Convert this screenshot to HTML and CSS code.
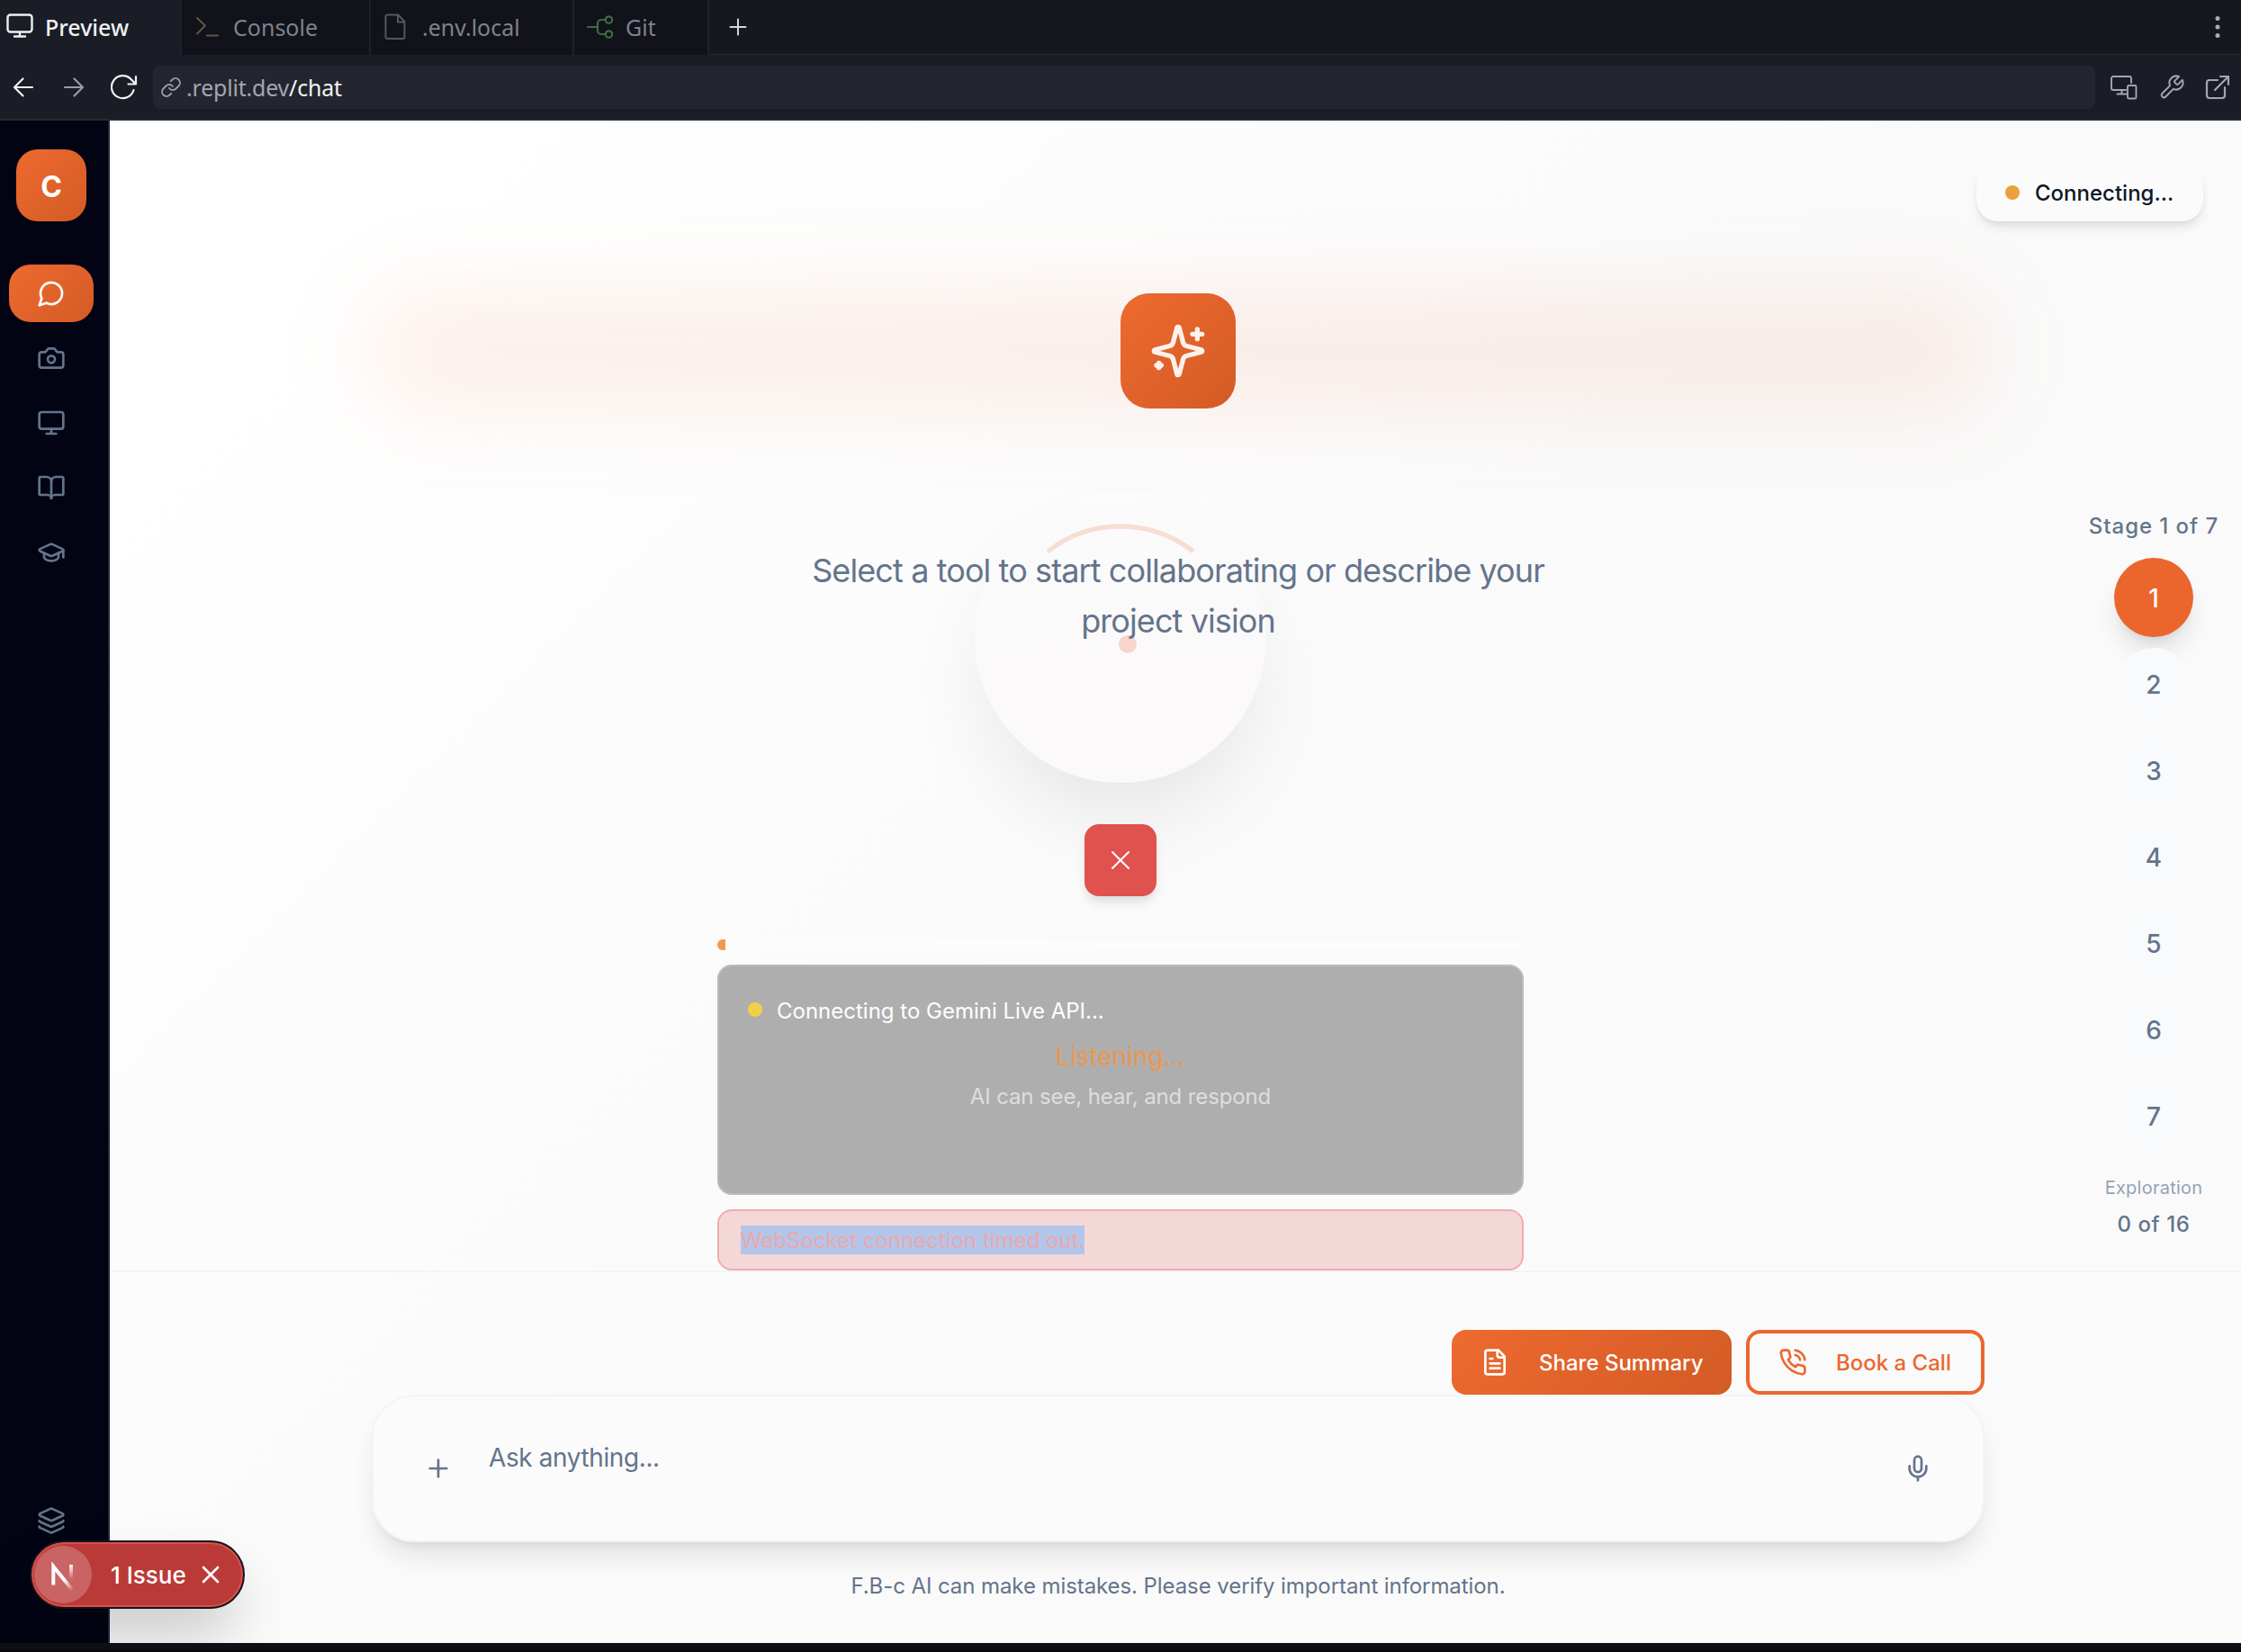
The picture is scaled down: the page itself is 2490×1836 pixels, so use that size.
FILE: index.html
```html
<!DOCTYPE html>
<html lang="en">
<head>
<meta charset="utf-8">
<title>Preview</title>
<link rel="stylesheet" href="styles.css">
</head>
<body>
<div class="window">
  <header class="tabs">
    <div class="tab tab-active">
      <svg class="ico" width="32" height="48" viewBox="0 0 32 48" stroke-width="2.4"><rect x="1.5" y="10.500" width="27" height="19" rx="3"/><path d="M15 30v4M9 34.500h12"/></svg>
      <span>Preview</span>
    </div>
    <div class="tab tab-console">
      <svg class="ico" width="28" height="32" viewBox="0 0 28 32" stroke="#5c5942" stroke-width="2"><path d="M3 6l9 8.500-9 9M14 25.500h12"/></svg>
      <span>Console</span>
    </div>
    <div class="tab tab-env">
      <svg class="ico" width="28" height="32" viewBox="0 0 28 32" stroke="#55575f" stroke-width="2"><path d="M4.500 2.500h12l7 7.500v17a2 2 0 0 1-2 2h-17a2 2 0 0 1-2-2v-22.500a2 2 0 0 1 2-2zM16 3v7.500h7.500"/></svg>
      <span>.env.local</span>
    </div>
    <div class="tab tab-git">
      <svg class="ico" width="32" height="32" viewBox="0 0 32 32" stroke="#3f6a45" stroke-width="2.200"><path d="M2 16h11M22 8h-5a4 4 0 0 0-4 4v8a4 4 0 0 0 4 4h5"/><circle cx="25.500" cy="8" r="3.700"/><circle cx="25.500" cy="24" r="3.700"/></svg>
      <span>Git</span>
    </div>
    <div class="tab-rest">
      <svg class="ico" width="20" height="20" viewBox="0 0 20 20" stroke="#d5d6da" stroke-width="2"><path d="M10 1.500v17M1.500 10h17"/></svg>
      <svg width="6" height="26" viewBox="0 0 6 26" fill="#a9acb6"><circle cx="3" cy="3.500" r="2.500"/><circle cx="3" cy="13" r="2.500"/><circle cx="3" cy="22.500" r="2.500"/></svg>
    </div>
  </header>
  <nav class="toolbar">
    <div class="nav-buttons">
      <svg class="ico" width="24" height="24" viewBox="0 0 24 24" stroke="#f2f2f4" stroke-width="2.200"><path d="M22 12H2M11.500 2.500L2 12l9.500 9.500"/></svg>
      <svg class="ico" width="24" height="24" viewBox="0 0 24 24" stroke="#9a9da6" stroke-width="2.200"><path d="M2 12H22M12.500 2.500L22 12l-9.500 9.500"/></svg>
      <svg class="ico" width="32" height="30" viewBox="0 0 32 30" stroke="#f2f2f4" stroke-width="2.200"><path d="M25.500 18A12.500 12.500 0 1 1 22.500 6l4.500 4.500M28 3v8.500h-8.500"/></svg>
    </div>
    <div class="url">
      <svg class="ico" width="24" height="24" viewBox="0 0 24 24" stroke="#9a9da6" stroke-width="1.900"><path d="M10 13a5 5 0 0 0 7.540.540l3-3a5 5 0 0 0-7.070-7.070l-1.720 1.710"/><path d="M14 11a5 5 0 0 0-7.540-.540l-3 3a5 5 0 0 0 7.070 7.070l1.710-1.710"/></svg>
      <span>.replit.dev<b>/chat</b></span>
    </div>
    <div class="tool-buttons">
      <svg class="ico" width="30" height="28" viewBox="0 0 30 28" stroke-width="1.900"><path d="M23 9V4a2 2 0 0 0-2-2H3a2 2 0 0 0-2 2v11a2 2 0 0 0 2 2h14M12.500 17v4M7.500 21.500h10"/><rect x="19" y="12" width="9.500" height="14.500" rx="1.500"/></svg>
      <svg class="ico" width="30" height="30" viewBox="0 0 24 24" stroke-width="1.600"><path d="M14.700 6.300a1 1 0 0 0 0 1.400l1.600 1.600a1 1 0 0 0 1.400 0l3.770-3.770a6 6 0 0 1-7.940 7.940l-6.910 6.910a2.120 2.120 0 0 1-3-3l6.910-6.910a6 6 0 0 1 7.940-7.940l-3.760 3.760z"/></svg>
      <svg class="ico" width="28" height="28" viewBox="0 0 28 28" stroke-width="2.200"><path d="M14 6H5a3 3 0 0 0-3 3v14a3 3 0 0 0 3 3h14a3 3 0 0 0 3-3v-9M11 17L26 2M17 2h9v9"/></svg>
    </div>
  </nav>

  <div class="app">
    <aside class="sidebar">
      <div class="logo">C</div>
      <div class="menu">
        <div class="item item-active"><svg class="ico lu" viewBox="0 0 24 24"><path d="M7.900 20A9 9 0 1 0 4 16.100L2 22Z"/></svg></div>
        <div class="item"><svg class="ico lu" viewBox="0 0 24 24"><path d="M14.500 4h-5L7 7H4a2 2 0 0 0-2 2v9a2 2 0 0 0 2 2h16a2 2 0 0 0 2-2V9a2 2 0 0 0-2-2h-3l-2.500-3z"/><circle cx="12" cy="13" r="3"/></svg></div>
        <div class="item"><svg class="ico lu" viewBox="0 0 24 24"><rect width="20" height="14" x="2" y="3" rx="2"/><path d="M8 21h8M12 17v4"/></svg></div>
        <div class="item"><svg class="ico lu" viewBox="0 0 24 24"><path d="M12 7v14"/><path d="M3 18a1 1 0 0 1-1-1V4a1 1 0 0 1 1-1h5a4 4 0 0 1 4 4 4 4 0 0 1 4-4h5a1 1 0 0 1 1 1v13a1 1 0 0 1-1 1h-6a3 3 0 0 0-3 3 3 3 0 0 0-3-3z"/></svg></div>
        <div class="item"><svg class="ico lu" viewBox="0 0 24 24"><path d="M21.420 10.922a1 1 0 0 0-.019-1.838L12.830 5.180a2 2 0 0 0-1.660 0L2.600 9.080a1 1 0 0 0 0 1.832l8.570 3.908a2 2 0 0 0 1.660 0z"/><path d="M22 10v6"/><path d="M6 12.500V16a6 3 0 0 0 12 0v-3.500"/></svg></div>
      </div>
      <div class="item item-last"><svg class="ico lu" viewBox="0 0 24 24"><path d="M12.830 2.180a2 2 0 0 0-1.660 0L2.600 6.080a1 1 0 0 0 0 1.830l8.580 3.910a2 2 0 0 0 1.660 0l8.580-3.900a1 1 0 0 0 0-1.830z"/><path d="M2 12a1 1 0 0 0 .580.910l8.600 3.910a2 2 0 0 0 1.650 0l8.580-3.900A1 1 0 0 0 22 12"/><path d="M2 17a1 1 0 0 0 .580.910l8.600 3.910a2 2 0 0 0 1.650 0l8.580-3.900A1 1 0 0 0 22 17"/></svg></div>
    </aside>

    <main class="main">
      <section class="stage">
        <div class="voice">
          <div class="orb">
            <svg width="324" height="324" viewBox="0 0 324 324" fill="none"><path d="M81 67A131 131 0 0 1 243 67" stroke="#f8ddd3" stroke-width="5.300"/><circle cx="170" cy="170" r="10" fill="#f7d5cb"/></svg>
          </div>
          <div class="stop"><svg class="ico" width="22" height="22" viewBox="0 0 22 22" stroke="#fff" stroke-width="2"><path d="M2 2l18 18M20 2L2 20"/></svg></div>
          <div class="meter"><div class="meter-fill"></div></div>
          <div class="panel">
            <div class="panel-status"><i class="dot dot-yellow"></i><span>Connecting to Gemini Live API...</span></div>
            <div class="listening">Listening...</div>
            <div class="hint">AI can see, hear, and respond</div>
          </div>
          <div class="error"><span class="selected">WebSocket connection timed out.</span></div>
        </div>

        <div class="hero">
          <div class="hero-head">
            <div class="glow"></div>
            <div class="tile"><svg class="ico" width="64" height="64" viewBox="0 0 24 24"><path d="M9.937 15.500A2 2 0 0 0 8.500 14.063l-6.135-1.582a.5.5 0 0 1 0-.962L8.500 9.936A2 2 0 0 0 9.937 8.500l1.582-6.135a.5.5 0 0 1 .963 0L14.063 8.500A2 2 0 0 0 15.500 9.937l6.135 1.581a.5.5 0 0 1 0 .964L15.500 14.063a2 2 0 0 0-1.437 1.437l-1.582 6.135a.5.5 0 0 1-.963 0z"/><path d="M20 3v4M22 5h-4M4 17v2M5 18H3"/></svg></div>
          </div>
          <p class="lead">Select a tool to start collaborating or describe your<br>project vision</p>
        </div>

        <div class="status"><i class="dot dot-amber"></i><span>Connecting...</span></div>

        <div class="rail">
          <div class="rail-title">Stage 1 of 7</div>
          <div class="step step-on">1</div>
          <div class="step">2</div>
          <div class="step">3</div>
          <div class="step">4</div>
          <div class="step">5</div>
          <div class="step">6</div>
          <div class="step">7</div>
          <div class="rail-label">Exploration</div>
          <div class="rail-count">0 of 16</div>
          <div class="rail-bar"></div>
        </div>
      </section>

      <section class="composer">
        <div class="actions">
          <div class="btn btn-fill"><svg class="ico lu" viewBox="0 0 24 24"><path d="M15 2H6a2 2 0 0 0-2 2v16a2 2 0 0 0 2 2h12a2 2 0 0 0 2-2V7Z"/><path d="M14 2v4a2 2 0 0 0 2 2h4M10 9H8M16 13H8M16 17H8"/></svg><span>Share Summary</span></div>
          <div class="btn btn-line"><svg class="ico lu" viewBox="0 0 24 24"><path d="M22 16.920v3a2 2 0 0 1-2.180 2 19.790 19.790 0 0 1-8.630-3.070 19.500 19.500 0 0 1-6-6 19.790 19.790 0 0 1-3.070-8.670A2 2 0 0 1 4.110 2h3a2 2 0 0 1 2 1.720 12.840 12.840 0 0 0 .7 2.810 2 2 0 0 1-.450 2.110L8.090 9.910a16 16 0 0 0 6 6l1.270-1.270a2 2 0 0 1 2.110-.450 12.840 12.840 0 0 0 2.810.7A2 2 0 0 1 22 16.920z"/><path d="M14.050 2a9 9 0 0 1 8 7.940M14.050 6A5 5 0 0 1 18 10"/></svg><span>Book a Call</span></div>
        </div>
        <div class="input">
          <svg class="ico lu" viewBox="0 0 24 24"><path d="M5 12h14M12 5v14"/></svg>
          <div class="placeholder">Ask anything...</div>
          <svg class="ico lu" viewBox="0 0 24 24"><path d="M12 2a3 3 0 0 0-3 3v7a3 3 0 0 0 6 0V5a3 3 0 0 0-3-3Z"/><path d="M19 10v2a7 7 0 0 1-14 0v-2M12 19v3"/></svg>
        </div>
        <p class="disclaimer">F.B-c AI can make mistakes. Please verify important information.</p>
      </section>
    </main>

    <div class="badge">
      <div class="badge-logo">
        <svg width="64" height="64" viewBox="0 0 64 64" fill="none">
          <defs>
            <linearGradient id="fadeA" gradientUnits="userSpaceOnUse" x1="34" y1="37" x2="44" y2="49"><stop stop-color="#fff"/><stop offset="1" stop-color="#fff" stop-opacity="0"/></linearGradient>
            <linearGradient id="fadeB" gradientUnits="userSpaceOnUse" x1="0" y1="21" x2="0" y2="37"><stop stop-color="#fff"/><stop offset="1" stop-color="#fff" stop-opacity="0"/></linearGradient>
          </defs>
          <path d="M21.300 43.500V23L42 48.500" stroke="url(#fadeA)" stroke-width="4"/>
          <path d="M41 21v17" stroke="url(#fadeB)" stroke-width="3.800"/>
        </svg>
      </div>
      <span class="badge-text">1 Issue</span>
      <svg class="ico" width="20" height="20" viewBox="0 0 20 20" stroke="#fff" stroke-width="2.600"><path d="M2 2l16 16M18 2L2 18"/></svg>
    </div>
  </div>
</div>
</body>
</html>
```
FILE: styles.css
```css
* { box-sizing: border-box; }
body { margin: 0; background: #0e0f14; font-family: Inter, sans-serif; }
p { margin: 0; }
.window { width: 2490px; height: 1836px; display: flex; flex-direction: column; overflow: hidden; border-bottom: 2px solid #06060a; }
.ico { fill: none; stroke-linecap: round; stroke-linejoin: round; flex: none; display: block; }
.ico:not([stroke]) { stroke: currentColor; }
.lu { width: 32px; height: 32px; stroke-width: 2; }

.tabs { display: flex; height: 61px; flex: none; background: #11121a; font: 25px "Noto Sans", sans-serif; color: #7f828b; }
.tab { display: flex; align-items: center; border-right: 2px solid #20212a; height: 61px; padding-bottom: 2px; }
.tab-active { width: 202px; background: #1a1d25; color: #f0f0f2; padding-left: 7px; gap: 11px; font-weight: 500; }
.tab-console { width: 210px; padding-left: 14px; gap: 15px; }
.tab-env { width: 226px; padding-left: 14px; gap: 15px; }
.tab-git { width: 150px; padding-left: 13px; gap: 12px; }
.tab-rest { flex: 1; display: flex; align-items: center; justify-content: space-between; padding: 0 23px 0 22px; background: #171720; border-bottom: 1px solid #282933; }

.toolbar { display: flex; align-items: center; height: 73px; flex: none; background: #1a1d25; border-bottom: 2px solid #262834; padding-right: 12px; }
.nav-buttons { width: 170px; display: flex; align-items: center; padding-left: 14px; gap: 32px; }
.nav-buttons svg:last-child { margin-left: -3px; }
.url { width: 2158px; height: 48px; border-radius: 8px; background: #23262f; display: flex; align-items: center; gap: 5px; padding-left: 8px; color: #a3a6af; font: 25px "Noto Sans", sans-serif; letter-spacing: -.2px; }
.url b { font-weight: 400; color: #f2f2f4; }
.tool-buttons { flex: 1; display: flex; align-items: center; justify-content: space-between; padding-left: 17px; color: #a3a6af; }

.app { height: 1692px; flex: none; display: flex; position: relative; overflow: hidden; }
.sidebar { width: 122px; flex: none; background: #020414; border-right: 2px solid #1e293b; display: flex; flex-direction: column; padding: 32px 16px 0 10px; color: #64748b; }
.logo { width: 78px; height: 80px; margin-left: 8px; padding-top: 2px; border-radius: 24px; background: linear-gradient(135deg, #ee6a2f, #d35b26); color: #fff; font-size: 32px; font-weight: 700; display: flex; align-items: center; justify-content: center; }
.menu { margin-top: 48px; display: flex; flex-direction: column; gap: 8px; }
.item { width: 94px; height: 64px; display: flex; align-items: center; justify-content: center; border-radius: 24px; }
.item-active { background: linear-gradient(135deg, #ee6a2f, #d35b26); color: #fff; }
.item-last { margin-top: auto; margin-bottom: 104px; }

.main { flex: 1; display: flex; flex-direction: column; background: linear-gradient(135deg, #fff 0%, #fff 10%, #fafafa 50%, #fafafa 100%); color: #64748b; }
.stage { height: 1280px; flex: none; position: relative; border-bottom: 2px solid #f1f5f9; }

.hero { position: relative; padding: 192px 285px 0 291px; }
.hero-head { position: relative; display: flex; justify-content: center; }
.glow { position: absolute; inset: 0; border-radius: 48px; background: linear-gradient(90deg, rgba(238,106,47,.1), rgba(225,95,45,.1)); filter: blur(48px); }
.tile { position: relative; width: 128px; height: 128px; border-radius: 32px; background: linear-gradient(135deg, #ee6a2f, #d35b26); color: #fdf1ec; display: flex; align-items: center; justify-content: center; }
.tile svg { stroke-width: 2; }
.lead { margin-top: 152px; text-align: center; font-size: 36px; line-height: 56px; letter-spacing: -.9px; }

.voice { position: absolute; left: 675px; top: 412px; width: 896px; display: flex; flex-direction: column; align-items: center; }
.orb { width: 324px; height: 324px; border-radius: 50%; background: linear-gradient(180deg, rgba(250,250,250,.2), #fbf9fa 60%); box-shadow: 0 50px 100px -24px rgba(0,0,0,.1); }
.stop { margin-top: 46px; width: 80px; height: 80px; border-radius: 16px; background: #df524d; display: flex; align-items: center; justify-content: center; box-shadow: 0 8px 12px -2px rgba(0,0,0,.12); }
.meter { margin-top: 48px; width: 896px; height: 12px; border-radius: 6px; background: #fcfcfc; overflow: hidden; }
.meter-fill { width: 9px; height: 12px; background: #f09a4f; }
.panel { margin-top: 16px; width: 896px; height: 256px; border-radius: 16px; border: 2px solid #bbb; background: #aeaeae; padding: 28px 32px; }
.panel-status { display: flex; align-items: center; gap: 16px; color: #fff; font-size: 24px; height: 40px; }
.panel-status span { padding-top: 2px; }
.dot { width: 16px; height: 16px; border-radius: 50%; flex: none; }
.dot-yellow { background: #f2cf49; }
.dot-amber { background: #e9a23b; }
.listening { text-align: center; color: #ee964b; font-size: 28px; line-height: 40px; margin-top: 12px; }
.hint { text-align: center; color: #dedede; font-size: 24px; line-height: 32px; margin-top: 9px; letter-spacing: -.12px; }
.error { margin-top: 16px; width: 896px; height: 68px; border-radius: 16px; border: 2px solid #f0adaa; background: #f4d8d7; padding-left: 24px; display: flex; align-items: center; font-size: 24px; line-height: 34px; color: #e9a9ab; }
.selected { background: #b4c5ea; height: 32px; }

.status { position: absolute; left: 2074px; top: 48px; width: 252px; height: 64px; border-radius: 24px; background: #fbfbfb; box-shadow: 0 8px 12px -2px rgba(0,0,0,.1), 0 4px 8px -4px rgba(0,0,0,.08); display: flex; align-items: center; gap: 17px; padding-left: 32px; color: #0f172a; font-size: 24px; font-weight: 500; }

.rail { position: absolute; left: 2171px; top: 432px; width: 200px; display: flex; flex-direction: column; align-items: center; font-size: 24px; }
.rail-title { height: 54px; line-height: 38px; font-weight: 500; letter-spacing: .95px; }
.step { width: 80px; height: 80px; border-radius: 50%; margin-bottom: 16px; background: #f8fafc; display: flex; align-items: center; justify-content: center; font-size: 28px; font-weight: 500; position: relative; padding-top: 1px; }
.step-on { width: 88px; height: 88px; margin-bottom: 12px; background: #eb662d; color: #fff; box-shadow: 0 20px 30px -6px rgba(0,0,0,.12), 0 8px 12px -8px rgba(0,0,0,.12); }
.rail-label { margin-top: 6px; font-size: 20px; line-height: 36px; color: #94a3b8; letter-spacing: .25px; }
.rail-count { font-size: 24px; line-height: 46px; font-weight: 500; letter-spacing: .55px; }
.rail-bar { width: 96px; height: 8px; border-radius: 4px; background: #f8fafc; }

.composer { padding: 64px 285px 0 291px; display: flex; flex-direction: column; }
.actions { display: flex; justify-content: flex-end; gap: 16px; font-size: 24px; font-weight: 500; }
.btn { height: 72px; border-radius: 16px; display: flex; align-items: center; }
.btn-fill { width: 311px; background: linear-gradient(135deg, #ee6a2f, #d35b26); color: #fff; padding-left: 32px; gap: 33px; }
.btn-line { width: 265px; border: 4px solid #ec672e; color: #ec672e; padding-left: 32px; gap: 32px; }
.input { height: 164px; border-radius: 48px; border: 2px solid #f1f5f9; background: #fbfbfb; box-shadow: 0 20px 30px -6px rgba(0,0,0,.1), 0 8px 12px -8px rgba(0,0,0,.1); display: flex; align-items: center; padding: 0 56px 0 56px; font-size: 28px; }
.placeholder { flex: 1; padding-left: 40px; margin-top: -24px; letter-spacing: -.4px; }
.disclaimer { text-align: center; font-size: 24px; line-height: 40px; margin-top: 29px; letter-spacing: -.08px; }

.badge { position: absolute; left: 33px; top: 1578px; width: 239px; height: 76px; border-radius: 38px; background: #ba3a37; border: 2px solid #14151a; box-shadow: inset 0 0 0 2px #d85050, 0 32px 64px -10px rgba(0,0,0,.25); display: flex; align-items: center; padding-left: 3px; color: #fff; font-size: 26px; font-weight: 500; }
.badge-logo { width: 64px; height: 64px; border-radius: 50%; background: #ca6363; flex: none; }
.badge-logo svg { display: block; }
.badge-text { margin-left: 21px; margin-right: 17px; }
```
